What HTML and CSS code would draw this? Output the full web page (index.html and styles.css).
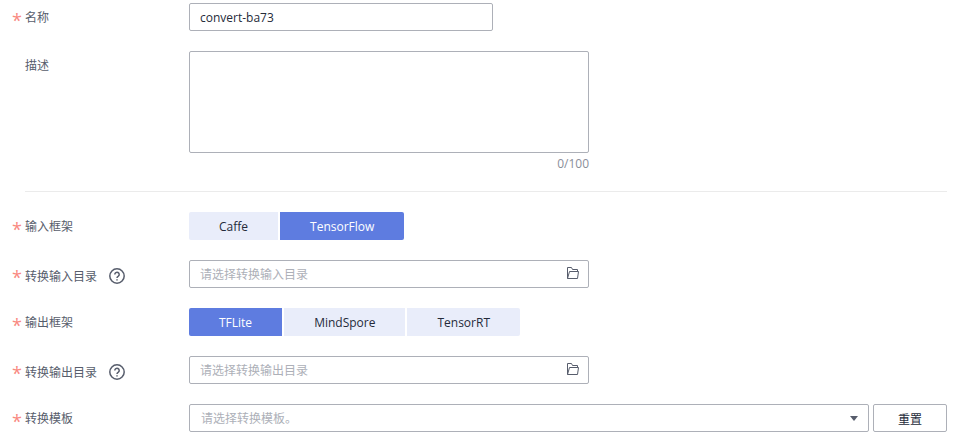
FILE: index.html
```html
<!DOCTYPE html>
<html lang="zh-CN">
<head>
<meta charset="utf-8">
<title>模型转换</title>
<link rel="stylesheet" href="styles.css">
</head>
<body>
<form class="form">
  <div class="row">
    <label class="label required" for="name"><span>名称</span></label>
    <input class="field name" id="name" type="text" value="convert-ba73">
  </div>
  <div class="row">
    <label class="label" for="desc"><span>描述</span></label>
    <div class="stack">
      <textarea class="field area" id="desc" maxlength="100"></textarea>
      <div class="count">0/100</div>
    </div>
  </div>
  <hr class="divider">
  <div class="row">
    <div class="label required" id="in-framework"><span>输入框架</span></div>
    <div class="tabs" role="group" aria-labelledby="in-framework">
      <button class="tab" type="button">Caffe</button>
      <button class="tab active" type="button">TensorFlow</button>
    </div>
  </div>
  <div class="row">
    <label class="label required with-help" for="in-dir"><span>转换输入目录</span>
      <svg class="help" viewBox="0 0 16 16"><circle cx="8" cy="8" r="7.2"/><path d="M5.8 6.4a2.2 2.2 0 1 1 3.5 1.8C8.4 8.8 8 9 8 9.9"/><path d="M8 11.2v1.4"/></svg>
    </label>
    <div class="picker">
      <input class="field" id="in-dir" type="text" placeholder="请选择转换输入目录">
      <svg class="folder" viewBox="0 0 14 14"><path d="M1.5 12.5v-11h4l1 2h5v2M1.5 12.5l2-7h9l-1 7z"/></svg>
    </div>
  </div>
  <div class="row">
    <div class="label required" id="out-framework"><span>输出框架</span></div>
    <div class="tabs" role="group" aria-labelledby="out-framework">
      <button class="tab active" type="button">TFLite</button>
      <button class="tab" type="button">MindSpore</button>
      <button class="tab" type="button">TensorRT</button>
    </div>
  </div>
  <div class="row">
    <label class="label required with-help" for="out-dir"><span>转换输出目录</span>
      <svg class="help" viewBox="0 0 16 16"><circle cx="8" cy="8" r="7.2"/><path d="M5.8 6.4a2.2 2.2 0 1 1 3.5 1.8C8.4 8.8 8 9 8 9.9"/><path d="M8 11.2v1.4"/></svg>
    </label>
    <div class="picker">
      <input class="field" id="out-dir" type="text" placeholder="请选择转换输出目录">
      <svg class="folder" viewBox="0 0 14 14"><path d="M1.5 12.5v-11h4l1 2h5v2M1.5 12.5l2-7h9l-1 7z"/></svg>
    </div>
  </div>
  <div class="row">
    <label class="label required" for="template"><span>转换模板</span></label>
    <div class="template">
      <div class="select-wrap">
        <select class="field select" id="template"><option>请选择转换模板。</option></select>
        <svg class="caret" viewBox="0 0 8 5"><path d="M0 0h8L4 5z"/></svg>
      </div>
      <button class="reset" type="button">重置</button>
    </div>
  </div>
</form>
</body>
</html>
```
FILE: styles.css
```css
* { box-sizing: border-box; }
body {
  margin: 0;
  background: #fff;
  color: #252b3a;
  font: 12px/18px "Open Sans", "Noto Sans CJK SC", sans-serif;
}
input, textarea, select, button { font: inherit; color: inherit; margin: 0; }
.form {
  display: flex;
  flex-direction: column;
  gap: 20px;
  padding: 3px 8px 7px 12px;
}
.row {
  display: grid;
  grid-template-columns: 177px minmax(0, 1fr);
  align-items: start;
}
.label {
  display: flex;
  align-items: center;
  height: 28px;
  padding-left: 13px;
  color: #575d6c;
}
.label > span { padding-top: 2px; }
.required { padding-left: 0; }
.required::before {
  content: "*";
  width: 13px;
  height: 18px;
  color: #f98981;
  font-size: 18px;
  line-height: 24px;
}
.with-help > span, .help { margin-top: 4px; }
.help {
  width: 16px;
  height: 16px;
  margin-left: 12px;
  fill: none;
  stroke: #575d6c;
  stroke-width: 1.5;
}
.field {
  display: block;
  width: 100%;
  height: 28px;
  padding: 0 10px;
  border: 1px solid #adb0b8;
  border-radius: 2px;
  background: #fff;
  outline: none;
}
.field::placeholder { color: #adb0b8; opacity: 1; }
.name { max-width: 304px; }
.stack, .picker { max-width: 400px; }
.area { height: 102px; resize: none; }
.count {
  padding-top: 2px;
  line-height: 18px;
  height: 18px;
  color: #8a8e99;
  text-align: right;
}
.divider {
  width: auto;
  height: 1px;
  margin: 0 0 0 13px;
  border: 0;
  background: #ebebeb;
}
.tabs { display: flex; gap: 2px; }
.tab {
  height: 28px;
  padding: 2px 30px 0;
  border: 0;
  background: #e9edfa;
}
.tab:first-child { border-radius: 2px 0 0 2px; }
.tab:last-child { border-radius: 0 2px 2px 0; }
.active { background: #5e7ce0; color: #fff; }
.picker, .select-wrap { position: relative; }
.folder {
  position: absolute;
  top: 6px;
  right: 9px;
  width: 14px;
  height: 14px;
  fill: none;
  stroke: #575d6c;
}
.template { display: flex; gap: 4px; }
.select-wrap { flex: 1; }
.select { appearance: none; padding: 2px 11px 0; color: #adb0b8; }
.caret {
  position: absolute;
  top: 12px;
  right: 11px;
  width: 8px;
  height: 5px;
  fill: #575d6c;
  pointer-events: none;
}
.reset {
  width: 74px;
  height: 28px;
  padding: 3px 0 0;
  border: 1px solid #adb0b8;
  border-radius: 2px;
  background: #fff;
}
```
